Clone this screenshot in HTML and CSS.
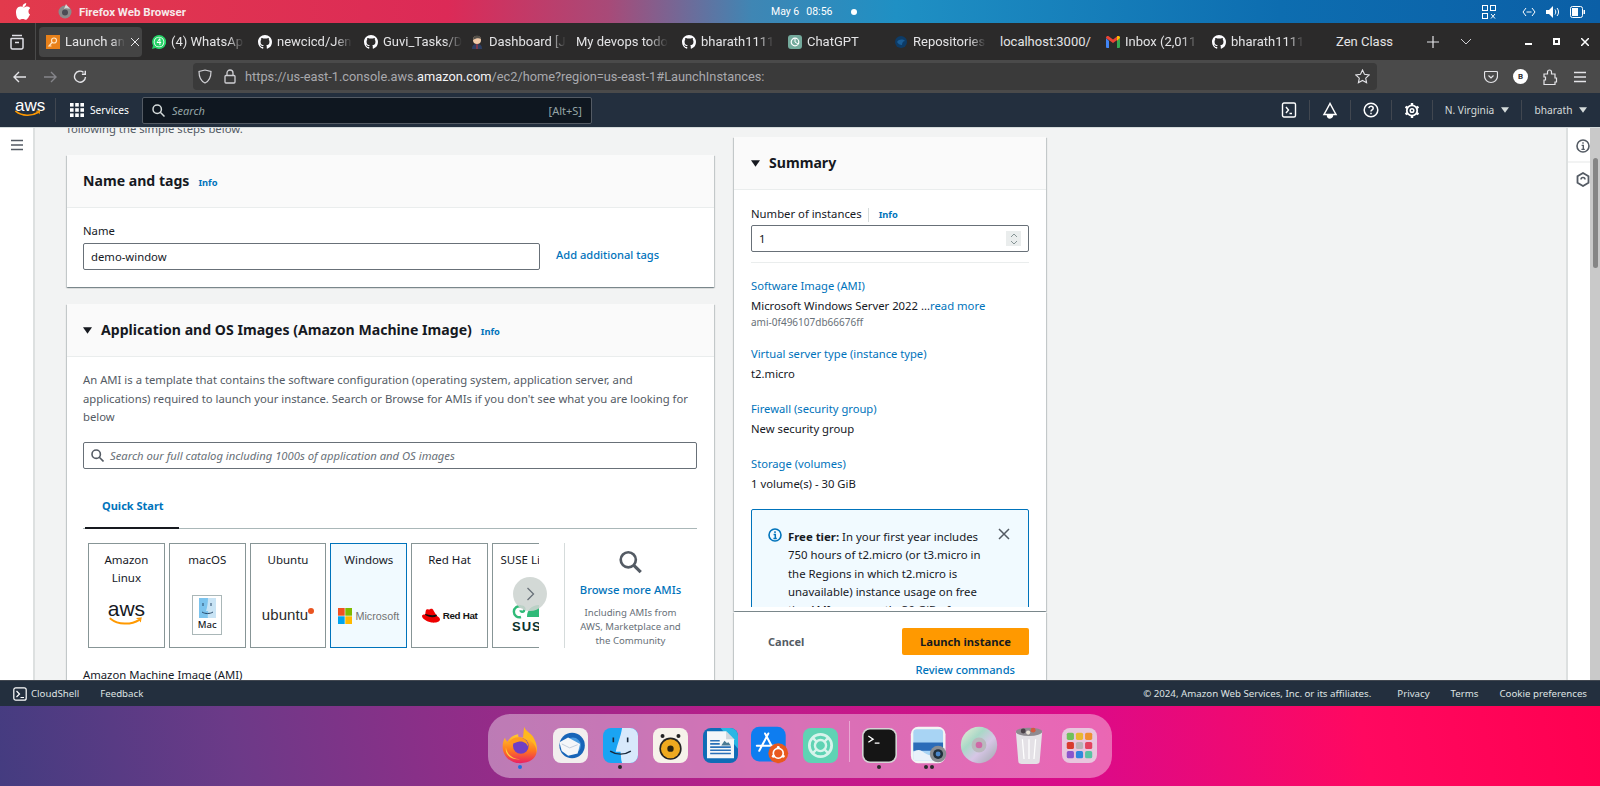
FILE: index.html
```html
<!DOCTYPE html>
<html>
<head>
    <meta charset="UTF-8">
    <title>Launch an instance | EC2 | us-east-1</title>
    <link rel="stylesheet" href="styles.css">
</head>
<body>
<svg class="defs" width="0" height="0">
    <symbol id="gh" viewBox="0 0 16 16"><path fill="#fbfbfe" d="M8 0C3.58 0 0 3.58 0 8c0 3.54 2.29 6.53 5.47 7.59.4.07.55-.17.55-.38 0-.19-.01-.82-.01-1.49-2.01.37-2.53-.49-2.69-.94-.09-.23-.48-.94-.82-1.13-.28-.15-.68-.52-.01-.53.63-.01 1.08.58 1.23.82.72 1.21 1.87.87 2.33.66.07-.52.28-.87.51-1.07-1.78-.2-3.64-.89-3.64-3.95 0-.87.31-1.59.82-2.15-.08-.2-.36-1.02.08-2.12 0 0 .67-.21 2.2.82.64-.18 1.32-.27 2-.27.68 0 1.36.09 2 .27 1.53-1.04 2.2-.82 2.2-.82.44 1.1.16 1.92.08 2.12.51.56.82 1.27.82 2.15 0 3.07-1.87 3.75-3.65 3.95.29.25.54.73.54 1.48 0 1.07-.01 1.93-.01 2.2 0 .21.15.46.55.38A8.013 8.013 0 0016 8c0-4.42-3.58-8-8-8z"/></symbol>
    <symbol id="caret" viewBox="0 0 10 10"><path fill="currentColor" d="M0 1.5h10L5 8.5z"/></symbol>
    <symbol id="smile" viewBox="0 0 30 9"><path fill="none" stroke="#f90" stroke-width="1.8" stroke-linecap="round" d="M1 1.5c7 5.5 18 6 26 1"/><path fill="#f90" d="M24.500 .8l4.700-.5-.9 4.400-.8-.1.2-2.700-3.200-.1z"/></symbol>
</svg>

<div class="screen">
    <!-- top bar of the desktop -->
    <div class="topbar">
        <div class="top-left">
            <svg class="apple" width="14" height="17" viewBox="0 0 14 17"><path fill="#fff" d="M10.200 0c.1 1.200-.3 2.200-1 3-.7.800-1.700 1.300-2.700 1.200-.1-1.100.4-2.200 1-2.900C8.200.600 9.300.100 10.200 0zM13.500 12.300c-.4.900-.6 1.300-1.100 2.100-.7 1.100-1.700 2.400-2.900 2.400-1.100 0-1.400-.7-2.800-.7-1.500 0-1.800.7-2.900.7-1.200 0-2.100-1.200-2.800-2.300C-.1 11.400-.5 7.700.8 5.700c.9-1.400 2.300-2.200 3.700-2.200 1.300 0 2.200.8 3.300.8 1 0 1.700-.8 3.300-.8 1.200 0 2.400.6 3.300 1.700-2.900 1.600-2.400 5.700.5 6.800z"/></svg>
            <svg class="ff-mini" width="14" height="15" viewBox="0 0 14 15"><circle cx="7" cy="8" r="6.500" fill="#8b8b8b"/><circle cx="7" cy="8.500" r="3" fill="#4c4c55"/><path fill="#d8d8d8" d="M8 0c1 2 3 3 4 5-2-1-5-1-6 0z"/></svg>
            <span class="app-name">Firefox Web Browser</span>
        </div>
        <div class="clock"><span>May 6</span><span>08:56</span><i class="clock-dot"></i></div>
        <div class="top-right">
            <svg width="16" height="16" viewBox="0 0 16 16" fill="none" stroke="#fff" stroke-width="1"><rect x="1.500" y="1.500" width="5" height="5"/><rect x="9.500" y="1.500" width="5" height="5"/><rect x="1.500" y="9.500" width="5" height="5"/><path d="M10 10l4 4.500M14 10l-4 4.500"/></svg>
            <svg width="14" height="10" viewBox="0 0 14 10" fill="none" stroke="#fff" stroke-width="1"><path d="M4 1L1 5l3 4M10 1l3 4-3 4M4.500 5h5"/></svg>
            <svg width="14" height="12" viewBox="0 0 14 12"><path fill="#fff" d="M0 4h3l4-4v12L3 8H0z"/><path fill="none" stroke="#fff" d="M9 3.500c1 1.500 1 3.500 0 5M11 2c2 2.500 2 5.500 0 8"/></svg>
            <svg width="15" height="12" viewBox="0 0 15 12"><rect x=".500" y=".500" width="12" height="11" rx="2" fill="none" stroke="#fff"/><rect x="2" y="2" width="6" height="8" fill="#fff"/><rect x="13.500" y="4" width="1.500" height="4" fill="#fff"/></svg>
        </div>
    </div>

    <!-- firefox tabs -->
    <div class="tabbar">
        <div class="tab-view">
            <svg width="16" height="16" viewBox="0 0 16 16" fill="none" stroke="#e0e0e6" stroke-width="1.500"><path d="M3 1.500h10M2.500 4.500h11a.500.500 0 01.500.500v8.500a1.500 1.500 0 01-1.500 1.500h-9A1.500 1.500 0 012 13.500V5a.500.500 0 01.500-.500z"/><path d="M6 8.500h4"/></svg>
        </div>
        <div class="tabs">
            <div class="tab tab-active">
                <svg class="fav" width="14" height="14" viewBox="0 0 14 14"><rect width="14" height="14" fill="#e8811a"/><circle cx="8" cy="5.500" r="2.500" fill="none" stroke="#ffe5c4" stroke-width="1.200"/><path d="M6 7.500L3 11h2.500" fill="none" stroke="#ffe5c4" stroke-width="1.200"/></svg>
                <span class="tab-label">Launch an</span>
                <svg class="tab-x" width="10" height="10" viewBox="0 0 10 10" stroke="#e8e8ea" stroke-width="1"><path d="M1 1l8 8M9 1l-8 8"/></svg>
            </div>
            <div class="tab">
                <svg class="fav" width="14" height="14" viewBox="0 0 14 14"><path fill="#25d366" d="M7 0a7 7 0 00-6 10.500L0 14l3.600-1A7 7 0 107 0z"/><circle cx="7" cy="7" r="5.300" fill="#fff"/><circle cx="7" cy="7" r="4.500" fill="#25d366"/><path fill="#fff" d="M7.200 3.500L4.500 8h2.900v2h1V8h.8v-.9h-.8V3.500zM5.800 7.100l1.600-2.400v2.400z"/></svg>
                <span class="tab-label">(4) WhatsAp</span>
            </div>
            <div class="tab"><svg class="fav" width="14" height="14"><use href="#gh"/></svg><span class="tab-label">newcicd/Jen</span></div>
            <div class="tab"><svg class="fav" width="14" height="14"><use href="#gh"/></svg><span class="tab-label">Guvi_Tasks/D</span></div>
            <div class="tab">
                <svg class="fav" width="14" height="14" viewBox="0 0 14 14"><circle cx="7" cy="5" r="4" fill="#f0c9a8"/><path fill="#54504a" d="M3 5c0-3 2-4.500 4-4.500S11 2 11 4C9 3 6 3 3 5z"/><path fill="#2d3e63" d="M2 14c0-4 2-5 5-5s5 1 5 5z"/><path fill="#c33" d="M6.500 9h1v5h-1z"/></svg>
                <span class="tab-label">Dashboard [J</span>
            </div>
            <div class="tab"><span class="tab-label">My devops todo</span></div>
            <div class="tab"><svg class="fav" width="14" height="14"><use href="#gh"/></svg><span class="tab-label">bharath1111</span></div>
            <div class="tab">
                <svg class="fav" width="14" height="14" viewBox="0 0 14 14"><rect width="14" height="14" rx="3" fill="#74aa9c"/><circle cx="7" cy="7" r="3.800" fill="none" stroke="#fff" stroke-width="1.200"/><path d="M7 3.200v3.800l3 2" fill="none" stroke="#fff"/></svg>
                <span class="tab-label">ChatGPT</span>
            </div>
            <div class="tab">
                <svg class="fav" width="14" height="14" viewBox="0 0 14 14"><circle cx="7" cy="7" r="6" fill="#0d3b66"/><path d="M3 7c2-3 6-3 8-1-2 0-3 2-3 4-2 0-4-1-5-3z" fill="#1a5d96"/></svg>
                <span class="tab-label">Repositories</span>
            </div>
            <div class="tab"><span class="tab-label tab-full">localhost:3000/</span></div>
            <div class="tab">
                <svg class="fav" width="14" height="12" viewBox="0 0 14 12"><path fill="#4285f4" d="M0 2v9a1 1 0 001 1h2V5z"/><path fill="#34a853" d="M14 2v9a1 1 0 01-1 1h-2V5z"/><path fill="#ea4335" d="M0 2l7 5 7-5c0-2-2-2.500-3-1.500L7 3.500 3 .5C2-.5 0 0 0 2z"/><path fill="#fbbc04" d="M11 .5V5l3-3c0-2-2-2.500-3-1.500z"/></svg>
                <span class="tab-label">Inbox (2,011</span>
            </div>
            <div class="tab"><svg class="fav" width="14" height="14"><use href="#gh"/></svg><span class="tab-label">bharath1111</span></div>
            <div class="tab tab-blank"><span class="tab-label tab-full">Zen Class</span></div>
        </div>
        <div class="tab-tools">
            <svg width="12" height="12" viewBox="0 0 12 12" stroke="#e4e4e8" stroke-width="1.200"><path d="M6 0v12M0 6h12"/></svg>
            <svg width="12" height="7" viewBox="0 0 12 7" fill="none" stroke="#d0d0d4" stroke-width="1"><path d="M1 1l5 5 5-5"/></svg>
        </div>
        <div class="win-btns">
            <svg width="7" height="7" viewBox="0 0 7 7"><rect y="5" width="7" height="2" fill="#fff"/></svg>
            <svg width="7" height="7" viewBox="0 0 7 7"><rect x="1" y="1" width="5" height="5" fill="none" stroke="#fff" stroke-width="2"/></svg>
            <svg width="8" height="8" viewBox="0 0 8 8" stroke="#fff" stroke-width="1.500"><path d="M0 0l8 8M8 0L0 8"/></svg>
        </div>
    </div>

    <!-- firefox url bar -->
    <div class="urlbar">
        <div class="nav-btns">
            <svg width="14" height="12" viewBox="0 0 14 12" fill="none" stroke="#e4e4e8" stroke-width="1.400"><path d="M13 6H1.500M6 1L1 6l5 5"/></svg>
            <svg width="14" height="12" viewBox="0 0 14 12" fill="none" stroke="#85858a" stroke-width="1.400"><path d="M1 6h11.500M8 1l5 5-5 5"/></svg>
            <svg width="14" height="14" viewBox="0 0 14 14" fill="none" stroke="#e4e4e8" stroke-width="1.400"><path d="M10.500 2.400A5.500 5.500 0 1012.500 7"/><path d="M12.300.8v3.400H8.900"/></svg>
        </div>
        <div class="urlfield">
            <svg width="14" height="15" viewBox="0 0 14 15" fill="none" stroke="#d0d0d4" stroke-width="1.200"><path d="M7 1l6 1.500c0 6-1.500 9.500-6 11.500C2.500 12 1 8.500 1 2.500z"/></svg>
            <svg class="url-lock" width="12" height="15" viewBox="0 0 12 15" fill="none" stroke="#d0d0d4" stroke-width="1.300"><rect x="1" y="6.500" width="10" height="7.500" rx="1"/><path d="M3 6.500V4a3 3 0 016 0v2.500"/></svg>
            <span class="url-text">https://us-east-1.console.aws.<b>amazon.com</b>/ec2/home?region=us-east-1#LaunchInstances:</span>
            <svg class="url-star" width="15" height="15" viewBox="0 0 15 15" fill="none" stroke="#e4e4e8" stroke-width="1.100"><path d="M7.500 1l2 4.300 4.700.6-3.500 3.200.9 4.700-4.100-2.300-4.100 2.300.9-4.700L.8 5.900l4.700-.6z"/></svg>
        </div>
        <div class="url-tools">
            <svg width="14" height="14" viewBox="0 0 14 14" fill="none" stroke="#e4e4e8" stroke-width="1.200"><path d="M1.500 1.500h11a1 1 0 011 1V6a6.500 6.500 0 01-13 0V2.500a1 1 0 011-1z"/><path d="M4.500 5.500L7 8l2.500-2.500"/></svg>
            <span class="avatar">B</span>
            <svg width="15" height="17" viewBox="0 0 15 17" fill="none" stroke="#e4e4e8" stroke-width="1.200"><path d="M1 6h3.500V4a2 2 0 014 0v2H12v4h1.500v4H12v2.500H1V12h1.500V9H1z"/></svg>
            <svg width="14" height="12" viewBox="0 0 14 12" stroke="#e4e4e8" stroke-width="1.300"><path d="M1 1.500h12M1 6h12M1 10.500h12"/></svg>
        </div>
    </div>

    <!-- aws console header -->
    <div class="awsnav">
        <div class="aws-logo"><span class="aws-word">aws</span><svg width="26" height="8"><use href="#smile"/></svg></div>
        <div class="services">
            <svg width="14" height="14" viewBox="0 0 14 14" fill="#fff"><rect width="3.600" height="3.600"/><rect x="5.200" width="3.600" height="3.600"/><rect x="10.400" width="3.600" height="3.600"/><rect y="5.200" width="3.600" height="3.600"/><rect x="5.200" y="5.200" width="3.600" height="3.600"/><rect x="10.400" y="5.200" width="3.600" height="3.600"/><rect y="10.400" width="3.600" height="3.600"/><rect x="5.200" y="10.400" width="3.600" height="3.600"/><rect x="10.400" y="10.400" width="3.600" height="3.600"/></svg>
            <span>Services</span>
        </div>
        <div class="aws-search">
            <svg width="13" height="13" viewBox="0 0 13 13" fill="none" stroke="#d5dbdb" stroke-width="1.500"><circle cx="5.200" cy="5.200" r="4.200"/><path d="M8.300 8.300L12.500 12.500"/></svg>
            <span class="aws-search-ph">Search</span>
            <span class="aws-search-key">[Alt+S]</span>
        </div>
        <div class="aws-right">
            <div class="aws-ico"><svg width="16" height="16" viewBox="0 0 16 16" fill="none" stroke="#fff" stroke-width="1.400"><rect x="1.500" y="1" width="13" height="14" rx="1.500"/><path d="M5 5l2.500 3L5 11M8.500 11.500H11"/></svg></div>
            <div class="aws-ico"><svg width="16" height="17" viewBox="0 0 16 17" fill="none" stroke="#fff" stroke-width="1.500"><path d="M8 1.500L4.500 8 2 12.500h12L11.500 8z"/><path d="M5.500 13a2.500 3 0 005 0" fill="#fff"/></svg></div>
            <div class="aws-ico"><svg width="16" height="16" viewBox="0 0 16 16" fill="none" stroke="#fff" stroke-width="1.500"><circle cx="8" cy="8" r="6.800"/><path d="M5.800 6.200C6 4.800 7 4.300 8 4.300c1.300 0 2.200.8 2.200 1.900 0 1.700-2.200 1.600-2.200 3.400"/><path d="M8 10.800v1.400"/></svg></div>
            <div class="aws-ico"><svg width="16" height="17" viewBox="0 0 16 17" fill="none" stroke="#fff"><circle cx="8" cy="8.500" r="5.200" stroke-width="1.800"/><circle cx="8" cy="8.500" r="1.800" stroke-width="1.500"/><path stroke-width="2.400" d="M8 1v2.200M8 13.800V16M1.500 4.800l1.900 1.100M12.600 11.100l1.900 1.100M14.500 4.800l-1.900 1.100M3.400 11.100l-1.900 1.100"/></svg></div>
            <div class="aws-menu region"><span>N. Virginia</span><svg width="8" height="8"><use href="#caret"/></svg></div>
            <div class="aws-menu"><span>bharath</span><svg width="8" height="8"><use href="#caret"/></svg></div>
        </div>
    </div>

    <!-- console page -->
    <div class="content">
        <div class="sidenav">
            <svg width="14" height="12" viewBox="0 0 14 12" stroke="#545b64" stroke-width="1.600"><path d="M1 1.500h12M1 6h12M1 10.500h12"/></svg>
        </div>
        <div class="main">
            <div class="form-col">
                <p class="intro">following the simple steps below.</p>

                <section class="card">
                    <header class="card-head">
                        <h2>Name and tags</h2><a class="info">Info</a>
                    </header>
                    <div class="card-body name-body">
                        <label class="field-label">Name</label>
                        <div class="name-row">
                            <div class="text-input name-input">demo-window</div>
                            <a class="link-strong">Add additional tags</a>
                        </div>
                    </div>
                </section>

                <section class="card ami-card">
                    <header class="card-head">
                        <svg class="tri" width="9" height="9"><use href="#caret"/></svg>
                        <h2>Application and OS Images (Amazon Machine Image)</h2><a class="info">Info</a>
                    </header>
                    <div class="card-body">
                        <p class="ami-desc">An AMI is a template that contains the software configuration (operating system, application server, and applications) required to launch your instance. Search or Browse for AMIs if you don't see what you are looking for below</p>
                        <div class="text-input ami-search">
                            <svg width="13" height="13" viewBox="0 0 13 13" fill="none" stroke="#545b64" stroke-width="1.600"><circle cx="5.200" cy="5.200" r="4.200"/><path d="M8.300 8.300L12.500 12.500"/></svg>
                            <span>Search our full catalog including 1000s of application and OS images</span>
                        </div>
                        <div class="qs-tabs"><span class="qs-tab">Quick Start</span></div>
                        <div class="picker">
                            <div class="tiles">
                                <div class="tile">
                                    <div class="tile-name">Amazon Linux</div>
                                    <div class="tile-logo aws-dark"><span class="aws-word">aws</span><svg width="34" height="10"><use href="#smile"/></svg></div>
                                </div>
                                <div class="tile">
                                    <div class="tile-name">macOS</div>
                                    <div class="tile-logo mac-box">
                                        <svg width="17" height="20" viewBox="0 0 17 20"><rect width="17" height="20" fill="#7cc4ee"/><path d="M9 0h8v20H9c-1-3 1-4 0-7H7c1-3 2-8 2-13z" fill="#c9e4f5"/><path d="M4 5v3M12 5v3" stroke="#2a4a6a"/><path d="M3 14c3 2 8 2 11 0" fill="none" stroke="#2a4a6a"/></svg>
                                        <span>Mac</span>
                                    </div>
                                </div>
                                <div class="tile">
                                    <div class="tile-name">Ubuntu</div>
                                    <div class="tile-logo ubuntu-logo"><span>ubuntu</span><i></i></div>
                                </div>
                                <div class="tile tile-on">
                                    <div class="tile-name">Windows</div>
                                    <div class="tile-logo ms-logo">
                                        <svg width="14" height="16" viewBox="0 0 14 16"><rect width="6.700" height="7.700" fill="#f25022"/><rect x="7.300" width="6.700" height="7.700" fill="#7fba00"/><rect y="8.300" width="6.700" height="7.700" fill="#00a4ef"/><rect x="7.300" y="8.300" width="6.700" height="7.700" fill="#ffb900"/></svg>
                                        <span>Microsoft</span>
                                    </div>
                                </div>
                                <div class="tile">
                                    <div class="tile-name">Red Hat</div>
                                    <div class="tile-logo rh-logo">
                                        <svg width="18" height="15" viewBox="0 0 18 15"><path fill="#e00" d="M11.500 2.500C11 .800 9.500.500 8 1.200 6.500 1.800 5.500 1 4.500 1.500 3.500 2 3.500 5 3.200 6.500 1.500 6.300 0 6.800 0 8c0 2.500 4.500 5.500 9.500 6.500 4 .5 8.500-.5 8.500-3 0-2-2-2.500-3.500-4z"/><path fill="#111" d="M3 6.800c3 2 8 3.500 12 1.200l-.5-1.500C10 8 6 6.500 3.200 6z"/></svg>
                                        <span>Red Hat</span>
                                    </div>
                                </div>
                                <div class="tile">
                                    <div class="tile-name">SUSE Linux</div>
                                    <div class="tile-logo suse-logo">
                                        <svg width="44" height="17" viewBox="0 0 44 17"><path fill="none" stroke="#30ba78" stroke-width="2.400" d="M9 14A5.500 5.500 0 119 3.500c3 0 4.500 2.500 3 4.500-1 1.300-3.500 1-3.500-.8"/><path fill="#30ba78" d="M15 14c0-8 5-12 13-12 8 0 12 5 14 12h-4l-1-3-2 3h-4l-1-3-3 3z"/></svg>
                                        <span>SUSE</span>
                                    </div>
                                </div>
                            </div>
                            <button class="tile-next">
                                <svg width="9" height="14" viewBox="0 0 9 14" fill="none" stroke="#687078" stroke-width="1.300"><path d="M1.500 1l6 6-6 6"/></svg>
                            </button>
                            <div class="browse">
                                <svg width="27" height="27" viewBox="0 0 27 27" fill="none" stroke="#545b64" stroke-width="3"><circle cx="11" cy="11" r="8.500"/><path d="M17 17l8 8" stroke-width="3.600"/></svg>
                                <a class="browse-link">Browse more AMIs</a>
                                <p>Including AMIs from AWS, Marketplace and the Community</p>
                            </div>
                        </div>
                        <label class="field-label ami-label">Amazon Machine Image (AMI)</label>
                    </div>
                </section>
            </div>

            <div class="side-col">
                <section class="card summary">
                    <header class="card-head">
                        <svg class="tri" width="9" height="9"><use href="#caret"/></svg>
                        <h2>Summary</h2>
                    </header>
                    <div class="card-body summary-body">
                        <div class="count-label"><span>Number of instances</span><a class="info">Info</a></div>
                        <div class="text-input count-input">
                            <span>1</span>
                            <span class="stepper"><svg width="10" height="14" viewBox="0 0 10 14" fill="none" stroke="#879596"><path d="M2 5l3-3 3 3M2 9l3 3 3-3"/></svg></span>
                        </div>
                        <hr class="sum-rule">
                        <a class="sum-title">Software Image (AMI)</a>
                        <div class="sum-value sum-value-tight">Microsoft Windows Server 2022 ...<a class="blue">read more</a></div>
                        <div class="sum-id">ami-0f496107db66676ff</div>
                        <a class="sum-title">Virtual server type (instance type)</a>
                        <div class="sum-value">t2.micro</div>
                        <a class="sum-title">Firewall (security group)</a>
                        <div class="sum-value">New security group</div>
                        <a class="sum-title">Storage (volumes)</a>
                        <div class="sum-value">1 volume(s) - 30 GiB</div>
                        <div class="alert">
                            <svg class="alert-ico" width="14" height="14" viewBox="0 0 14 14"><circle cx="7" cy="7" r="6" fill="none" stroke="#0073bb" stroke-width="1.600"/><path d="M7 3.200v1.800M5.600 6.400H7.300v4M5.400 10.400h3.400" fill="none" stroke="#0073bb" stroke-width="1.500"/></svg>
                            <p><b>Free tier:</b> In your first year includes 750 hours of t2.micro (or t3.micro in the Regions in which t2.micro is unavailable) instance usage on free tier AMIs per month, 30 GiB of</p>
                            <svg class="alert-x" width="12" height="12" viewBox="0 0 12 12" stroke="#545b64" stroke-width="1.500"><path d="M1 1l10 10M11 1L1 11"/></svg>
                        </div>
                    </div>
                </section>
                <section class="card actions">
                    <div class="action-row">
                        <a class="cancel">Cancel</a>
                        <button class="launch">Launch instance</button>
                    </div>
                    <a class="review">Review commands</a>
                </section>
            </div>
        </div>
        <div class="tools-rail">
            <div class="rail-top">
                <svg width="14" height="14" viewBox="0 0 14 14" fill="none" stroke="#545b64" stroke-width="1.600"><circle cx="7" cy="7" r="6"/><path d="M7 3.200v1.600M5.600 6.400H7.300v4M5.400 10.400h3.400" stroke-width="1.400"/></svg>
            </div>
            <div class="rail-bottom">
                <svg width="14" height="15" viewBox="0 0 14 15" fill="none" stroke="#545b64" stroke-width="1.800"><path d="M7 1l5.500 3.200v6.600L7 14l-5.500-3.200V4.200z"/><path d="M5 7.500A2 2 0 119 7.500" stroke-width="1.500"/></svg>
            </div>
        </div>
        <div class="scrollbar"><div class="thumb"></div></div>
    </div>

    <div class="awsfoot">
        <div class="foot-left">
            <span class="foot-shell"><svg width="14" height="14" viewBox="0 0 14 14" fill="none" stroke="#fff" stroke-width="1.200"><rect x=".800" y=".800" width="12.400" height="12.400" rx="2"/><path d="M3.500 4l3 3-3 3M7.500 10.500H11"/></svg>CloudShell</span>
            <span>Feedback</span>
        </div>
        <div class="foot-right">
            <span class="foot-copy">© 2024, Amazon Web Services, Inc. or its affiliates.</span>
            <span>Privacy</span>
            <span>Terms</span>
            <span>Cookie preferences</span>
        </div>
    </div>

    <!-- desktop with the dock -->
    <div class="desktop">
        <div class="dock">
            <div class="dock-item">
                <svg class="dock-big" width="46" height="46" viewBox="0 0 46 46"><defs><linearGradient id="ffo" x1="0" y1="0" x2="0" y2="1"><stop offset="0" stop-color="#ffcb2e"/><stop offset=".55" stop-color="#ff7a1e"/><stop offset="1" stop-color="#ea1f63"/></linearGradient></defs><path fill="#ffb81e" d="M28 1c2 6 9 8 12 14 3 6 5 13 2 19L26 20z"/><path fill="url(#ffo)" d="M23 45C11 45 2 36 2 25c0-4 1-8 3-11 0 2 1 4 3 5 3-6 8-8 13-9-1 3 1 4 4 4 10 1 18 8 18 17 0 8-8 14-20 14z"/><circle cx="24" cy="24" r="9.500" fill="#6f3fc4"/><path fill="#ff9a1e" d="M9 20c4-5 10-7 15-6 5 1 9 5 9 11-3-6-8-7-12-6-4 1-9 4-12 1z"/><path fill="#ffd23a" d="M6 26c1 8 8 14 17 14-9 2-19-5-17-14z"/></svg>
                <i class="run-dot blue-dot"></i>
            </div>
            <div class="dock-item">
                <svg width="44" height="44" viewBox="0 0 44 44"><rect width="44" height="44" rx="10" fill="#f2eeee"/><circle cx="24" cy="22" r="16" fill="#1764b8"/><circle cx="25" cy="22" r="10" fill="#4a9be0"/><path fill="#f4f6f9" d="M8 18l11-6 15 8-3 12-12 3-8-6z"/><path fill="none" stroke="#b6c2d4" d="M11 20l10 5 10-4"/></svg>
                <i class="run-dot dot-none"></i>
            </div>
            <div class="dock-item">
                <svg width="44" height="44" viewBox="0 0 44 44"><rect width="44" height="44" rx="10" fill="#1aa4f3"/><path fill="#d8e9fb" d="M24 0h10a10 10 0 0110 10v24a10 10 0 01-10 10H24c-2-5-1-10-2-14h-6c2-10 6-18 8-30z"/><path d="M13 12v6M31 12v6" stroke="#1a2a3c" stroke-width="2"/><path d="M9 29c8 5 18 5 26 0" fill="none" stroke="#1a2a3c" stroke-width="1.800"/></svg>
                <i class="run-dot"></i>
            </div>
            <div class="dock-item">
                <svg width="44" height="44" viewBox="0 0 44 44"><rect width="44" height="44" rx="10" fill="#f6f2ea"/><circle cx="12" cy="10" r="2.500" fill="#222"/><circle cx="32" cy="10" r="2.500" fill="#222"/><circle cx="22" cy="26" r="14" fill="#222"/><circle cx="22" cy="26" r="12" fill="#eea91f"/><circle cx="22" cy="26" r="4" fill="#2c2410"/></svg>
                <i class="run-dot dot-none"></i>
            </div>
            <div class="dock-item">
                <svg width="44" height="44" viewBox="0 0 44 44"><rect width="44" height="44" rx="10" fill="#0f6cb6"/><path fill="#2ab6e4" d="M22 0h12a10 10 0 0110 10v16z"/><path fill="#f5f7f9" d="M5 4h24l10 10v24H5z"/><path fill="#d0d6dc" d="M29 4l10 10H29z"/><path d="M9 16h12M9 20h12M9 24h26M9 28h26M9 32h26" stroke="#2a70b8" stroke-width="2"/><path fill="#4a7a94" d="M23 22l4-6 3 3 2-1 3 4z"/></svg>
                <i class="run-dot dot-none"></i>
            </div>
            <div class="dock-item">
                <svg class="dock-big" width="46" height="46" viewBox="0 0 46 46"><rect y="1" width="42" height="42" rx="10" fill="#0e7df0"/><path d="M10 30L21 9M28 30L17 9M7 24h24" stroke="#fff" stroke-width="2.400" stroke-linecap="round"/><circle cx="33" cy="33" r="12" fill="#e9591e"/><circle cx="33" cy="33" r="6" fill="none" stroke="#fff" stroke-width="2"/><circle cx="33" cy="26" r="1.800" fill="#fff"/><circle cx="27" cy="36.500" r="1.800" fill="#fff"/><circle cx="39" cy="36.500" r="1.800" fill="#fff"/></svg>
                <i class="run-dot dot-none"></i>
            </div>
            <div class="dock-item">
                <svg width="44" height="44" viewBox="0 0 44 44"><rect width="44" height="44" rx="10" fill="#5fd3b4"/><circle cx="22" cy="22" r="14" fill="none" stroke="#d7f4ec" stroke-width="3.500"/><circle cx="22" cy="22" r="7" fill="none" stroke="#d7f4ec" stroke-width="3"/><path d="M12 12l6 6M32 12l-6 6M12 32l6-6M32 32l-6-6" stroke="#d7f4ec" stroke-width="3"/></svg>
                <i class="run-dot dot-none"></i>
            </div>
            <div class="dock-sep"></div>
            <div class="dock-item">
                <svg width="44" height="44" viewBox="0 0 44 44"><rect width="44" height="44" rx="10" fill="#d5d5d5"/><rect x="2" y="2" width="40" height="40" rx="8" fill="#151515"/><path d="M8 10l6 4-6 4" fill="none" stroke="#fff" stroke-width="1.600"/><path d="M16 19h6" stroke="#fff" stroke-width="1.600"/></svg>
                <i class="run-dot"></i>
            </div>
            <div class="dock-item">
                <svg class="dock-big" width="46" height="46" viewBox="0 0 46 46"><rect x="1" y="1" width="42" height="44" rx="9" fill="#f4f4f4"/><rect x="4" y="4" width="36" height="38" rx="4" fill="#a8d4f4"/><path fill="#2b6cb8" d="M4 20h36v10H4z"/><path fill="#e9f2fa" d="M4 32c6-6 10-2 16 2 6 3 12 2 20 2v2a4 4 0 01-4 4H8a4 4 0 01-4-4z"/><circle cx="34" cy="34" r="10" fill="#8a8d92"/><circle cx="34" cy="34" r="6" fill="#22303c"/><circle cx="34" cy="34" r="3" fill="#4a86c8"/></svg>
                <span class="run-dots"><i class="run-dot"></i><i class="run-dot"></i></span>
            </div>
            <div class="dock-item">
                <svg class="dock-big" width="46" height="46" viewBox="0 0 46 46"><defs><linearGradient id="cd" x1="0" y1="0" x2="1" y2="1"><stop offset="0" stop-color="#f0eed8"/><stop offset=".35" stop-color="#a9d8c7"/><stop offset=".6" stop-color="#d7c6e6"/><stop offset="1" stop-color="#9ea6aa"/></linearGradient></defs><circle cx="23" cy="23" r="22" fill="url(#cd)"/><circle cx="23" cy="23" r="9" fill="#b9b9bd"/><circle cx="23" cy="23" r="4" fill="#ce6aa6"/></svg>
                <i class="run-dot dot-none"></i>
            </div>
            <div class="dock-item">
                <svg class="dock-big" width="46" height="46" viewBox="-4 0 46 46"><path fill="#e4e1e6" d="M3 6h32l-3 36a4 4 0 01-4 4H10a4 4 0 01-4-4z"/><ellipse cx="19" cy="7" rx="16" ry="5" fill="#8f8a90"/><circle cx="12" cy="6" r="3" fill="#4a4148"/><circle cx="24" cy="5" r="3" fill="#d25a3f"/><circle cx="18" cy="8" r="2.500" fill="#eae2d6"/><path d="M11 16l2 24M19 16v24M27 16l-2 24" stroke="#fff" stroke-width="1.500"/></svg>
                <i class="run-dot dot-none"></i>
            </div>
            <div class="dock-item">
                <svg width="44" height="44" viewBox="0 0 44 44"><rect width="44" height="44" rx="10" fill="#e8c6de"/><rect x="6" y="6" width="9" height="9" rx="2" fill="#6fc05a"/><rect x="17.500" y="6" width="9" height="9" rx="2" fill="#e9b730"/><rect x="29" y="6" width="9" height="9" rx="2" fill="#ef9030"/><rect x="6" y="17.500" width="9" height="9" rx="2" fill="#d83a2e"/><rect x="17.500" y="17.500" width="9" height="9" rx="2" fill="#b7b3b6"/><rect x="29" y="17.500" width="9" height="9" rx="2" fill="#e2445e"/><rect x="6" y="29" width="9" height="9" rx="2" fill="#8a55cc"/><rect x="17.500" y="29" width="9" height="9" rx="2" fill="#2f88dc"/><rect x="29" y="29" width="9" height="9" rx="2" fill="#58c4a2"/></svg>
                <i class="run-dot dot-none"></i>
            </div>
        </div>
    </div>
</div>
</body>
</html>
```

FILE: styles.css
```css
* {
    box-sizing: border-box;
}

html, body {
    margin: 0;
    height: 100%;
    overflow: hidden;
}

body {
    font-family: "Noto Sans", sans-serif;
    color: #16191f;
}

.defs {
    display: block;
    height: 0;
}

h2, p {
    margin: 0;
}

.screen {
    width: 1600px;
    height: 786px;
    display: flex;
    flex-direction: column;
}

/* desktop top bar */
.topbar {
    height: 23px;
    flex: none;
    display: flex;
    align-items: center;
    color: #fff;
    font-family: Roboto, sans-serif;
    font-size: 12px;
    background: linear-gradient(90deg, #e23a4c 0%, #dc2a57 28%, #a84a78 38%, #3f86b4 47%, #1f90c4 56%, #0d6db0 80%, #0b5fa6 100%);
}

.top-left {
    width: 700px;
    display: flex;
    align-items: center;
}

.apple {
    margin-left: 16px;
}

.ff-mini {
    margin-left: 28px;
}

.app-name {
    margin-left: 7px;
    font-weight: 700;
    font-size: 11.500px;
    color: #f6e9ea;
}

.clock {
    margin-left: 71px;
    display: flex;
    align-items: center;
    gap: 7px;
    font-size: 10.500px;
}

.clock-dot {
    width: 6px;
    height: 6px;
    margin-left: 12px;
    border-radius: 50%;
    background: #fff;
}

.top-right {
    margin-left: auto;
    margin-right: 15px;
    display: flex;
    align-items: center;
    gap: 10px;
}

.top-right svg:first-child {
    margin-right: 15px;
}

/* firefox chrome */
.tabbar {
    height: 37px;
    flex: none;
    display: flex;
    align-items: center;
    background: #2b2a2a;
    color: #e4e4e6;
    font-family: Roboto, sans-serif;
    font-size: 13px;
}

.tab-view {
    width: 36px;
    height: 100%;
    padding-left: 9px;
    display: flex;
    align-items: center;
    border-right: 1px solid #4a4a4a;
}

.tabs {
    margin-left: 3px;
    display: flex;
    align-items: center;
}

.tab {
    width: 106px;
    height: 30px;
    padding: 0 7px;
    display: flex;
    align-items: center;
    gap: 5px;
    border-radius: 4px;
    overflow: hidden;
}

.tab-active {
    width: 103px;
    margin-right: 3px;
    background: #444;
}

.fav {
    flex: none;
}

.tab-label {
    flex: 1;
    white-space: nowrap;
    -webkit-mask-image: linear-gradient(90deg, #000 78%, transparent 100%);
    mask-image: linear-gradient(90deg, #000 78%, transparent 100%);
}

.tab-full {
    -webkit-mask-image: none;
    mask-image: none;
}

.tab-x {
    flex: none;
}

.tab-blank {
    padding-left: 25px;
}

.tab-tools {
    margin-left: 10px;
    display: flex;
    align-items: center;
    gap: 21px;
}

.win-btns {
    margin-left: auto;
    margin-right: 11px;
    display: flex;
    align-items: center;
    gap: 21px;
}

.urlbar {
    height: 33px;
    flex: none;
    display: flex;
    align-items: center;
    background: #4a4a4a;
    font-family: Roboto, sans-serif;
}

.nav-btns {
    width: 193px;
    padding-left: 13px;
    display: flex;
    align-items: center;
    gap: 16px;
}

.urlfield {
    width: 1184px;
    height: 27px;
    padding: 0 7px 0 5px;
    display: flex;
    align-items: center;
    gap: 7px;
    background: #3a3a3a;
    border-radius: 4px;
    color: #a9a9ad;
    font-size: 12.800px;
}

.url-lock {
    margin-left: 5px;
}

.url-text {
    margin-left: 2px;
}

.url-text b {
    font-weight: 400;
    color: #f4f4f6;
}

.url-star {
    margin-left: auto;
}

.url-tools {
    margin-left: auto;
    margin-right: 13px;
    display: flex;
    align-items: center;
    gap: 15px;
}

.avatar {
    width: 15px;
    height: 15px;
    border-radius: 50%;
    background: #fff;
    color: #333;
    font-size: 8px;
    font-weight: 700;
    text-align: center;
    line-height: 15px;
}

/* aws header */
.awsnav {
    height: 34px;
    flex: none;
    display: flex;
    align-items: center;
    background: #232f3e;
    color: #d5dbdb;
    font-size: 10.200px;
}

.aws-logo {
    width: 56px;
    height: 24px;
    padding-left: 15px;
    display: flex;
    flex-direction: column;
    color: #fff;
    border-right: 1px solid #414750;
}

.aws-logo svg {
    margin-top: -3px;
}

.aws-word {
    display: block;
    font-family: "Liberation Sans", sans-serif;
    font-size: 17px;
    line-height: 15px;
}

.services {
    width: 86px;
    padding-left: 14px;
    display: flex;
    align-items: center;
    gap: 6px;
    color: #fff;
}

.aws-search {
    width: 450px;
    height: 27px;
    padding: 0 9px;
    display: flex;
    align-items: center;
    background: #0f1720;
    border: 1px solid #545b64;
    border-radius: 2px;
    font-size: 11px;
}

.aws-search-ph {
    margin-left: 7px;
    font-style: italic;
    color: #95a5a6;
}

.aws-search-key {
    margin-left: auto;
    color: #95a5a6;
}

.aws-right {
    margin-left: auto;
    display: flex;
    align-items: center;
}

.aws-ico {
    width: 41px;
    height: 20px;
    display: flex;
    align-items: center;
    justify-content: center;
    border-right: 1px solid #414750;
}

.aws-menu {
    width: 78px;
    display: flex;
    align-items: center;
    justify-content: center;
    gap: 7px;
    height: 20px;
}

.region {
    width: 89px;
    border-right: 1px solid #414750;
}

/* page */
.content {
    height: 553px;
    flex: none;
    display: flex;
    background: #f2f3f3;
    border-top: 1px solid #d5dbdb;
    font-size: 11.300px;
    overflow: hidden;
}

.sidenav {
    width: 35px;
    flex: none;
    padding: 11px 0 0 10px;
    background: #fff;
    border-right: 2px solid #dde0e0;
}

.main {
    flex: 1;
    padding-left: 32px;
    display: flex;
    gap: 20px;
    overflow: hidden;
}

.form-col {
    width: 647px;
    flex: none;
}

.intro {
    margin-top: -8px;
    margin-bottom: 17px;
    line-height: 18px;
    color: #545b64;
}

.card {
    background: #fff;
    box-shadow: 0 1px 1px 0 rgba(0, 28, 36, .3), 1px 1px 1px 0 rgba(0, 28, 36, .15), -1px 1px 1px 0 rgba(0, 28, 36, .15);
}

.card-head {
    height: 53px;
    padding: 0 16px;
    display: flex;
    align-items: center;
    background: #fafafa;
    border-bottom: 1px solid #eaeded;
}

.card-head h2 {
    font-size: 14.100px;
    font-weight: 700;
    line-height: 20px;
}

.tri {
    margin-right: 9px;
}

.info {
    margin-left: 9px;
    margin-top: 3px;
    font-size: 9.300px;
    font-weight: 700;
    color: #0073bb;
}

.card-body {
    padding: 0 16px;
}

.name-body {
    height: 79px;
    padding-top: 14px;
}

.field-label {
    display: block;
    line-height: 18px;
    color: #16191f;
}

.name-row {
    margin-top: 3px;
    display: flex;
    align-items: center;
    gap: 16px;
}

.text-input {
    height: 27px;
    padding: 0 7px;
    display: flex;
    align-items: center;
    background: #fff;
    border: 1px solid #687078;
    border-radius: 2px;
}

.name-input {
    width: 457px;
}

.link-strong {
    margin-bottom: 4px;
    font-size: 11.100px;
    font-weight: 500;
    color: #0073bb;
}

.ami-card {
    margin-top: 17px;
    height: 400px;
}

.ami-desc {
    width: 613px;
    padding-top: 14px;
    line-height: 18.500px;
    color: #545b64;
}

.ami-search {
    width: 614px;
    margin-top: 15px;
    gap: 6px;
    font-style: italic;
    font-size: 11.250px;
    color: #687078;
}

.ami-search svg {
    flex: none;
}

.qs-tabs {
    width: 614px;
    height: 60px;
    border-bottom: 1px solid #aab7b8;
    display: flex;
    align-items: flex-end;
}

.qs-tab {
    width: 94px;
    margin-left: 2px;
    padding: 0 0 12px 17px;
    line-height: 18px;
    font-size: 11px;
    font-weight: 700;
    color: #0073bb;
    border-bottom: 2px solid #16191f;
    margin-bottom: -1px;
}

.picker {
    position: relative;
    width: 614px;
    margin-top: 14px;
    padding-left: 5px;
    display: flex;
}

.tiles {
    width: 451px;
    height: 105px;
    display: flex;
    gap: 4px;
    overflow: hidden;
}

.tile {
    width: 76.800px;
    flex: none;
    padding-top: 7px;
    display: flex;
    flex-direction: column;
    align-items: center;
    background: #fff;
    border: 1px solid #879596;
    font-size: 11.500px;
    line-height: 18px;
    text-align: center;
    color: #16191f;
}

.tile-on {
    background: #f1faff;
    border-color: #0073bb;
}

.tile-name {
    height: 36px;
    padding: 0 4px;
    white-space: normal;
}

.tile:last-child .tile-name {
    white-space: nowrap;
}

.tile-logo {
    flex: 1;
    display: flex;
    align-items: center;
    justify-content: center;
    margin-bottom: 12px;
}

.aws-dark {
    margin-top: 6px;
    flex-direction: column;
    color: #16191f;
}

.aws-dark .aws-word {
    font-size: 21px;
    line-height: 18px;
}

.aws-dark svg {
    margin-top: -1px;
}

.mac-box {
    flex: none;
    width: 30px;
    height: 40px;
    margin: 8px 0 0;
    flex-direction: column;
    background: #fff;
    border: 1px solid #aab7b8;
    font-size: 9.500px;
    font-weight: 500;
    line-height: 13px;
}

.ubuntu-logo {
    margin-top: 18px;
    font-family: "Liberation Sans", sans-serif;
    font-size: 15px;
    letter-spacing: .1px;
    color: #2d2d2d;
    align-items: flex-start;
}

.ubuntu-logo span {
    line-height: 20px;
}

.ubuntu-logo i {
    width: 6px;
    height: 6px;
    margin-top: 3px;
    border-radius: 50%;
    background: #e95420;
}

.ms-logo {
    margin-top: 21px;
    gap: 3px;
    align-items: flex-start;
    font-family: "Liberation Sans", sans-serif;
    font-size: 10.800px;
    color: #737373;
}

.ms-logo span {
    line-height: 16px;
}

.rh-logo {
    margin-top: 21px;
    gap: 3px;
    align-items: flex-start;
    font-family: "Liberation Sans", sans-serif;
    font-size: 9.800px;
    font-weight: 700;
    color: #151515;
}

.rh-logo span {
    line-height: 15px;
    letter-spacing: -.3px;
}

.suse-logo {
    flex-direction: column;
    align-items: flex-start;
    padding-left: 19px;
    margin-top: 16px;
    width: 100%;
    font-family: "Liberation Sans", sans-serif;
    font-size: 13px;
    font-weight: 700;
    letter-spacing: 1px;
    color: #0c322c;
    white-space: nowrap;
}

.suse-logo span {
    line-height: 14px;
}

/* arrow that lies over the tiles */
.tile-next {
    position: absolute;
    left: 430px;
    top: 34px;
    width: 34px;
    height: 34px;
    padding: 0;
    display: flex;
    align-items: center;
    justify-content: center;
    border: 0;
    border-radius: 50%;
    background: rgba(205, 212, 208, .88);
}

.browse {
    width: 132px;
    height: 105px;
    margin-left: 25px;
    display: flex;
    flex-direction: column;
    align-items: center;
    border-left: 1px solid #d5dbdb;
    padding: 7px 0 0 0;
    text-align: center;
}

.browse-link {
    margin-top: 7px;
    font-size: 11.300px;
    font-weight: 500;
    line-height: 18px;
    color: #0073bb;
}

.browse p {
    width: 110px;
    margin-top: 7px;
    font-size: 9.600px;
    line-height: 14px;
    color: #687078;
}

.ami-label {
    margin-top: 18px;
}

/* summary column */
.side-col {
    width: 312px;
    flex: none;
    margin-top: 9px;
    display: flex;
    flex-direction: column;
    gap: 1px;
    height: 560px;
}

.summary {
    height: 474px;
    overflow: hidden;
    flex: none;
}

.summary .card-head {
    padding-left: 17px;
}

.summary-body {
    height: 417px;
    padding: 0 17px;
    overflow: hidden;
}

.count-label {
    height: 35px;
    padding-top: 13px;
    display: flex;
    align-items: center;
    line-height: 18px;
}

.count-label .info {
    margin: 2px 0 0 6px;
    padding-left: 10px;
    border-left: 1px solid #d5dbdb;
    line-height: 14px;
}

.count-input {
    justify-content: space-between;
    padding-right: 7px;
}

.stepper {
    width: 15px;
    height: 15px;
    display: flex;
    align-items: center;
    justify-content: center;
    background: #eaeded;
}

.sum-rule {
    height: 1px;
    margin: 10px 0 14px;
    border: 0;
    background: #eaeded;
}

.sum-title {
    display: block;
    line-height: 18px;
    color: #0073bb;
    font-size: 11.200px;
}

.sum-value {
    margin-top: 2px;
    margin-bottom: 17px;
    line-height: 18px;
    font-size: 11.300px;
}

.sum-value-tight {
    margin-bottom: 0;
}

.blue {
    color: #0073bb;
}

.sum-id {
    margin-bottom: 16px;
    font-size: 10px;
    line-height: 14px;
    color: #687078;
}

.alert {
    position: relative;
    width: 278px;
    height: 160px;
    margin-top: -1px;
    padding: 18px 44px 0 36px;
    background: #f1faff;
    border: 1px solid #0073bb;
    border-radius: 2px;
    font-size: 11.400px;
    line-height: 18.300px;
}

.alert-ico {
    position: absolute;
    left: 16px;
    top: 18px;
}

.alert-x {
    position: absolute;
    right: 18px;
    top: 18px;
}

.actions {
    flex: 1;
    padding: 16px 17px 0;
}

.action-row {
    display: flex;
    align-items: center;
    justify-content: space-between;
}

.cancel {
    margin-left: 17px;
    font-size: 11px;
    font-weight: 700;
    color: #545b64;
}

.launch {
    width: 127px;
    height: 27px;
    border: 0;
    border-radius: 2px;
    background: #f90;
    color: #16191f;
    font-family: "Noto Sans", sans-serif;
    font-size: 11.200px;
    font-weight: 700;
}

.review {
    display: block;
    margin-top: 7px;
    margin-right: 14px;
    text-align: right;
    font-size: 11.200px;
    font-weight: 500;
    color: #0073bb;
}

.tools-rail {
    width: 24px;
    flex: none;
    background: #fff;
    border-left: 2px solid #dde0e0;
}

.rail-top {
    height: 35px;
    padding: 11px 0 0 8px;
    border-bottom: 2px solid #f2f3f3;
}

.rail-bottom {
    padding: 9px 0 0 8px;
}

.scrollbar {
    width: 10px;
    flex: none;
    padding: 30px 2px 0 3px;
    background: #c9c9c9;
}

.thumb {
    height: 110px;
    border-radius: 3px;
    background: #858585;
}

.awsfoot {
    height: 26px;
    flex: none;
    padding: 0 13px;
    display: flex;
    align-items: center;
    justify-content: space-between;
    background: #232f3e;
    color: #dfe3e3;
    font-size: 9.700px;
    border-top: 1px solid #414750;
}

.foot-left {
    display: flex;
    align-items: center;
    gap: 21px;
}

.foot-shell {
    display: flex;
    align-items: center;
    gap: 4px;
}

.foot-right {
    display: flex;
    align-items: center;
    gap: 21px;
}

.foot-copy {
    margin-right: 5px;
}

/* desktop and dock */
.desktop {
    height: 80px;
    flex: none;
    padding-left: 488px;
    padding-top: 8px;
    background: linear-gradient(80deg, #443c80 0%, #6c3a88 15%, #8b2f88 27%, #c01a8a 50%, #dc0a88 68%, #ff0860 85%, #ff0050 100%);
}

.dock {
    width: 624px;
    height: 64px;
    padding: 14px 0 0 7px;
    display: flex;
    align-items: flex-start;
    background: rgba(255, 255, 255, .38);
    border-radius: 22px;
}

.dock-item {
    width: 50px;
    flex: none;
    display: flex;
    flex-direction: column;
    align-items: center;
    gap: 2px;
}

.dock-item > svg {
    width: 35px;
    height: 35px;
}

.dock-item > svg.dock-big {
    width: 38px;
    height: 38px;
    margin: -2px 0 -1px;
}

.dock-sep {
    width: 1px;
    height: 41px;
    margin: -7px 4px 0;
    background: rgba(255, 255, 255, .4);
}

.run-dot {
    width: 4px;
    height: 4px;
    border-radius: 50%;
    background: #2b2b2b;
}

.blue-dot {
    background: #1f6fe0;
}

.dot-none {
    background: transparent;
}

.run-dots {
    display: flex;
    gap: 2px;
}
```
